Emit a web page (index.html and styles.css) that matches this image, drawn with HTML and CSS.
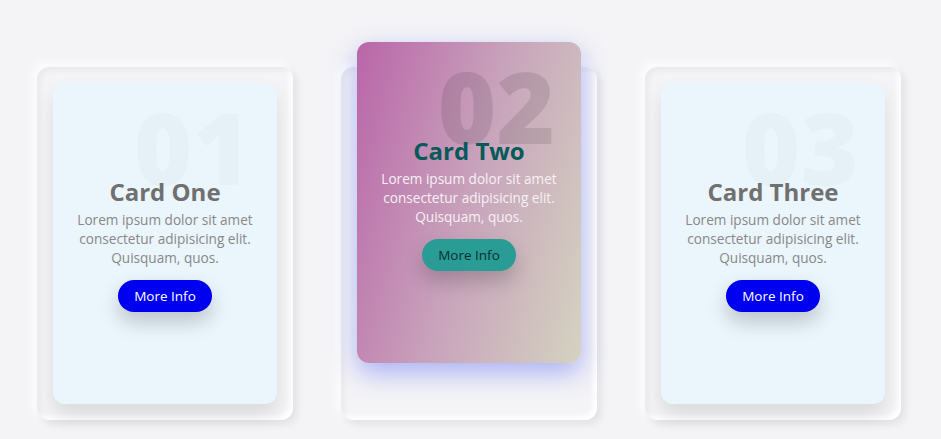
FILE: index.html
```html
<!DOCTYPE html>
<html lang="en">
<head>
<meta charset="utf-8">
<title>Cards</title>
<link rel="stylesheet" href="styles.css">
</head>
<body>
<div class="container">
  <div class="card">
    <div class="box">
      <div class="content">
        <h2 class="num">01</h2>
        <h3 class="title">Card One</h3>
        <p class="text">Lorem ipsum dolor sit amet consectetur adipisicing elit. Quisquam, quos.</p>
        <a class="btn" href="#">More Info</a>
      </div>
    </div>
  </div>
  <div class="card">
    <div class="box box-active">
      <div class="content">
        <h2 class="num">02</h2>
        <h3 class="title">Card Two</h3>
        <p class="text">Lorem ipsum dolor sit amet consectetur adipisicing elit. Quisquam, quos.</p>
        <a class="btn" href="#">More Info</a>
      </div>
    </div>
  </div>
  <div class="card">
    <div class="box">
      <div class="content">
        <h2 class="num">03</h2>
        <h3 class="title">Card Three</h3>
        <p class="text">Lorem ipsum dolor sit amet consectetur adipisicing elit. Quisquam, quos.</p>
        <a class="btn" href="#">More Info</a>
      </div>
    </div>
  </div>
</div>
</body>
</html>
```
FILE: styles.css
```css
* { box-sizing: border-box; }
html, body { margin: 0; padding: 0; }
body {
  background: #f4f3f6;
  font-family: "Open Sans", "DejaVu Sans", sans-serif;
  height: 439px;
  overflow: hidden;
}
.container {
  display: flex;
  justify-content: center;
  gap: 48px;
  padding: 67px 3px 0 0;
}
.card {
  width: 256px;
  height: 353px;
  padding: 16px;
  border-radius: 12px;
  box-shadow:
    inset 4px 4px 4px rgba(0,0,0,0.04),
    inset -4px -4px 4px rgba(255,255,255,0.9),
    4px 4px 8px rgba(0,0,0,0.08),
    -4px -4px 8px rgba(255,255,255,0.9);
}
.box {
  position: relative;
  height: 100%;
  border-radius: 12px;
  background: #ebf5fc;
  box-shadow: 0 12px 20px rgba(0,0,0,0.1);
  display: flex;
  align-items: center;
  justify-content: center;
  overflow: hidden;
}
.box-active {
  transform: translateY(-41px);
  background: linear-gradient(105deg, #b966a8 0%, #c8a3bb 50%, #d4d3c1 100%);
  box-shadow: 0 10px 26px rgba(60,80,240,0.4);
}
.content {
  text-align: center;
  padding: 0 12px;
}
.num {
  position: absolute;
  top: 13px;
  right: 26px;
  margin: 0;
  font-size: 100px;
  font-weight: 800;
  line-height: 1;
  color: rgba(0,0,0,0.02);
}
.box-active .num { color: rgba(0,0,0,0.1); }
.title {
  position: relative;
  margin: 0;
  font-size: 24px;
  line-height: 1.4;
  font-weight: 700;
  color: #707070;
}
.box-active .title { color: #07595a; }
.text {
  position: relative;
  margin: 1px 0 12px;
  font-size: 13.6px;
  line-height: 19.2px;
  font-weight: 400;
  color: #888888;
}
.box-active .text { color: #f7f0f5; }
.btn {
  position: relative;
  display: inline-block;
  padding: 0 16px;
  height: 32px;
  line-height: 32px;
  border-radius: 16px;
  background: #0000f0;
  color: #fff;
  font-size: 13.5px;
  text-decoration: none;
  box-shadow: 0 10px 20px rgba(0,0,0,0.2);
}
.box-active .btn {
  background: #2a9c96;
  color: #0c2f2e;
}
```
